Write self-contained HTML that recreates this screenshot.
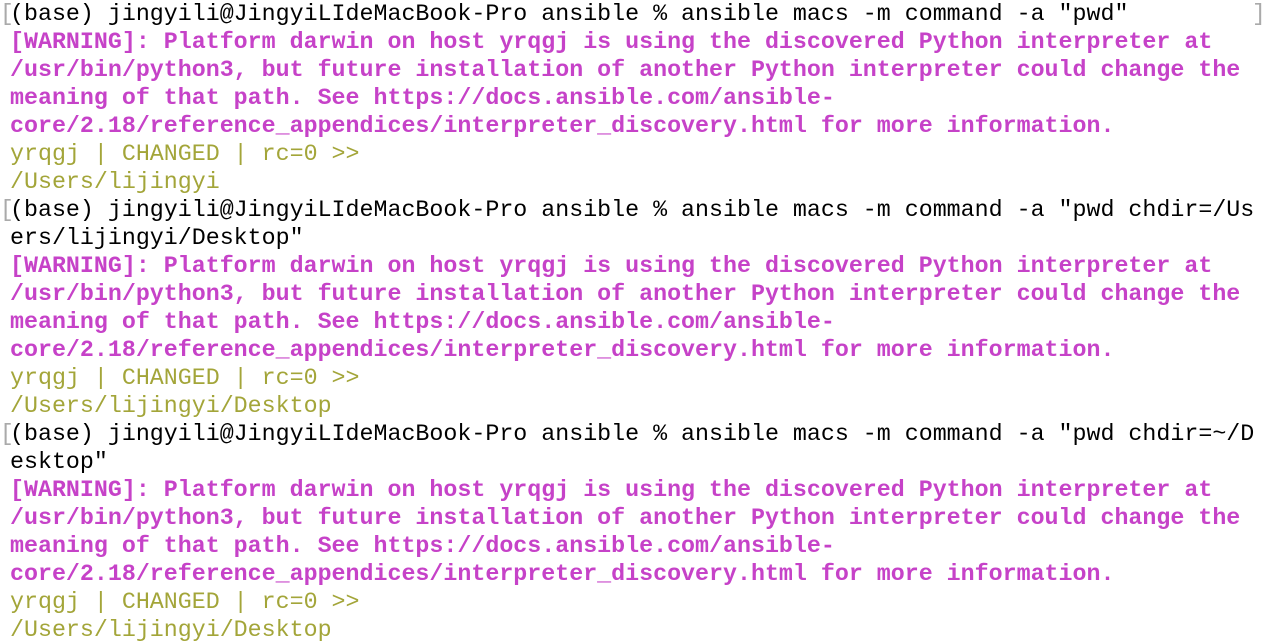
<!DOCTYPE html>
<html><head><meta charset="utf-8"><style>
html,body{margin:0;padding:0;background:#fff;width:1262px;height:642px;overflow:hidden}
pre{margin:0;position:absolute;left:10px;top:0px;font-family:"Liberation Mono",monospace;font-size:23.3px;line-height:28px;color:#000;white-space:pre}
.w{color:#c642c8;font-weight:bold}
.o{color:#a3a539}
.b{position:absolute;font-family:"Liberation Mono",monospace;font-size:23px;line-height:28px;color:#aaa}
</style></head><body>
<div class="b" style="left:0;top:0px">[</div>
<div class="b" style="left:1252px;top:0px">]</div>
<div class="b" style="left:0;top:196px">[</div>
<div class="b" style="left:0;top:420px">[</div>
<pre>(base) jingyili@JingyiLIdeMacBook-Pro ansible % ansible macs -m command -a "pwd"
<span class="w">[WARNING]: Platform darwin on host yrqgj is using the discovered Python interpreter at
/usr/bin/python3, but future installation of another Python interpreter could change the
meaning of that path. See https://docs.ansible.com/ansible-
core/2.18/reference_appendices/interpreter_discovery.html for more information.</span>
<span class="o">yrqgj | CHANGED | rc=0 &gt;&gt;
/Users/lijingyi</span>
(base) jingyili@JingyiLIdeMacBook-Pro ansible % ansible macs -m command -a "pwd chdir=/Us
ers/lijingyi/Desktop"
<span class="w">[WARNING]: Platform darwin on host yrqgj is using the discovered Python interpreter at
/usr/bin/python3, but future installation of another Python interpreter could change the
meaning of that path. See https://docs.ansible.com/ansible-
core/2.18/reference_appendices/interpreter_discovery.html for more information.</span>
<span class="o">yrqgj | CHANGED | rc=0 &gt;&gt;
/Users/lijingyi/Desktop</span>
(base) jingyili@JingyiLIdeMacBook-Pro ansible % ansible macs -m command -a "pwd chdir=~/D
esktop"
<span class="w">[WARNING]: Platform darwin on host yrqgj is using the discovered Python interpreter at
/usr/bin/python3, but future installation of another Python interpreter could change the
meaning of that path. See https://docs.ansible.com/ansible-
core/2.18/reference_appendices/interpreter_discovery.html for more information.</span>
<span class="o">yrqgj | CHANGED | rc=0 &gt;&gt;
/Users/lijingyi/Desktop</span></pre>
</body></html>
